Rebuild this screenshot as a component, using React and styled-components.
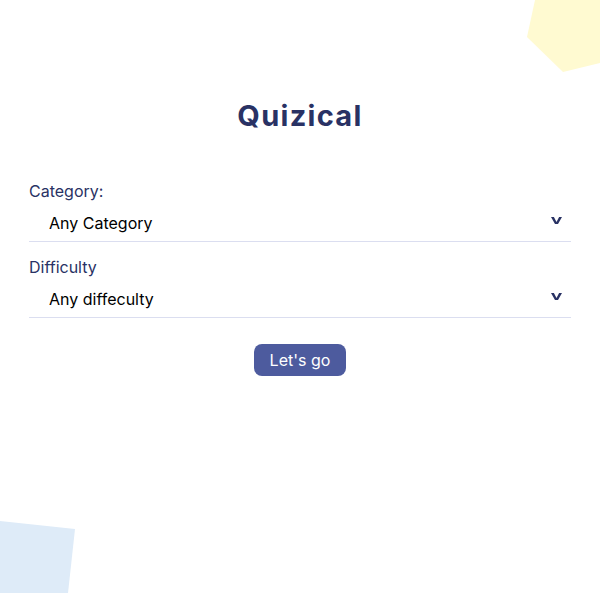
import React from "react";
import styled, { createGlobalStyle } from "styled-components";

const GlobalStyle = createGlobalStyle`
  * {
    box-sizing: border-box;
  }
  body {
    margin: 0;
    font-family: Inter, "Noto Sans", sans-serif;
    background: #ffffff;
  }
`;

const Page = styled.main`
  position: relative;
  width: 600px;
  height: 593px;
  overflow: hidden;
  background: #ffffff;
  padding: 98px 29px 0;
`;

const Blob = styled.svg`
  position: absolute;
  pointer-events: none;
  top: ${props => (props.$top !== undefined ? props.$top + "px" : "auto")};
  bottom: ${props => (props.$bottom !== undefined ? props.$bottom + "px" : "auto")};
  left: ${props => (props.$left !== undefined ? props.$left + "px" : "auto")};
  right: ${props => (props.$right !== undefined ? props.$right + "px" : "auto")};
`;

const Title = styled.h1`
  margin: 0 0 48px;
  text-align: center;
  font-size: 29px;
  line-height: 36px;
  font-weight: 700;
  letter-spacing: 1.3px;
  color: #293264;
`;

const Form = styled.form`
  display: flex;
  flex-direction: column;
  gap: 16px;
`;

const Field = styled.div`
  display: flex;
  flex-direction: column;
  gap: 5px;
`;

const Label = styled.label`
  font-size: 16px;
  line-height: 19px;
  color: #293264;
`;

const SelectRow = styled.div`
  display: flex;
  align-items: center;
  height: 36px;
  border-bottom: 1px solid #dbdef0;
  padding: 0 9px 2px 20px;
`;

const Select = styled.select`
  flex: 1;
  appearance: none;
  -webkit-appearance: none;
  border: none;
  outline: none;
  background: transparent;
  padding: 0;
  font-family: Inter, "Noto Sans", sans-serif;
  font-size: 16px;
  color: #000000;
`;

const Chevron = styled.svg`
  flex: none;
  margin-top: -5px;
`;

const Actions = styled.div`
  display: flex;
  justify-content: center;
  margin-top: 10px;
`;

const Button = styled.button`
  height: 32px;
  padding: 0 16px;
  border: none;
  border-radius: 8px;
  background: #4d5b9e;
  color: #ffffff;
  font-family: Inter, "Noto Sans", sans-serif;
  font-size: 16px;
  cursor: pointer;
`;

const SelectField = ({ label, options }) => (
  <Field>
    <Label>{label}</Label>
    <SelectRow>
      <Select>
        {options.map(o => (
          <option key={o}>{o}</option>
        ))}
      </Select>
      <Chevron width="11" height="7" viewBox="0 0 11 7">
        <polygon
          points="0,0 2.9,0 5.5,5 8.1,0 11,0 7,7 4,7"
          fill="#293264"
        />
      </Chevron>
    </SelectRow>
  </Field>
);

export default function App() {
  return (
    <>
      <GlobalStyle />
      <Page>
        <Blob $top={0} $right={0} width="73" height="73" viewBox="0 0 73 73">
          <polygon points="8,0 73,0 73,63 36,72 0,37" fill="#fffad1" />
        </Blob>
        <Blob $bottom={0} $left={0} width="75" height="72" viewBox="0 0 75 72">
          <polygon points="0,0 75,8 68,72 0,72" fill="#deebf8" />
        </Blob>
        <Title>Quizical</Title>
        <Form onSubmit={e => e.preventDefault()}>
          <SelectField label="Category:" options={["Any Category"]} />
          <SelectField label="Difficulty" options={["Any diffeculty"]} />
          <Actions>
            <Button type="submit">Let's go</Button>
          </Actions>
        </Form>
      </Page>
    </>
  );
}
